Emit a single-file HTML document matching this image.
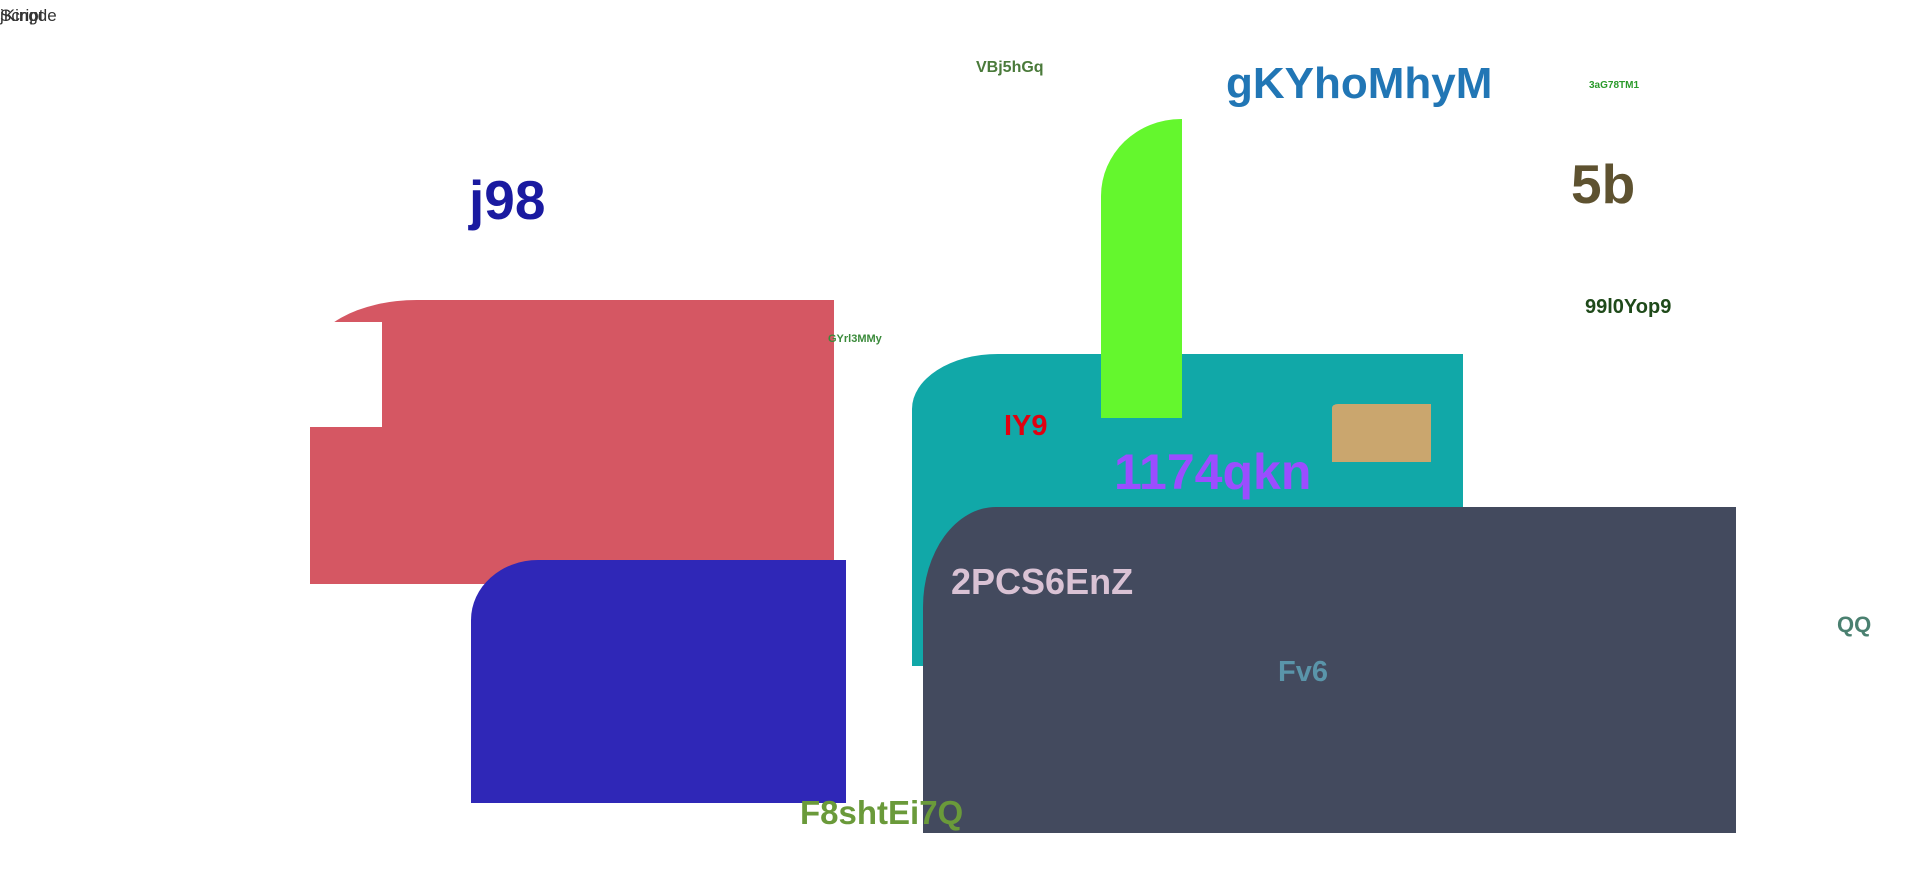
<!DOCTYPE html>
<html><head><meta charset="utf-8"><style>
html,body{margin:0;padding:0;width:1920px;height:870px;overflow:hidden;background:#fff;position:relative}
div{position:absolute}
.t{font-family:"Liberation Sans",sans-serif;font-weight:bold;white-space:nowrap;line-height:1}
</style></head><body>
<div class="t" style="left:0;top:7px;font-size:17px;font-weight:normal;color:#333">Script</div>
<div class="t" style="left:0;top:7px;font-size:17px;font-weight:normal;color:#333">jKingde</div>

<div style="left:310px;top:300px;width:524px;height:284px;background:#d55763;border-top-left-radius:107px 60px"></div>
<div style="left:310px;top:322px;width:72px;height:105px;background:#fff"></div>

<div style="left:471px;top:560px;width:375px;height:243px;background:#2f27b7;border-top-left-radius:67px 60px"></div>

<div style="left:912px;top:354px;width:551px;height:312px;background:#11a8a8;border-top-left-radius:86px 55px"></div>
<div style="left:1101px;top:119px;width:81px;height:299px;background:#64f72d;border-top-left-radius:80px 77px"></div>
<div style="left:1332px;top:404px;width:99px;height:58px;background:#caa66e;border-top-left-radius:6px 4px"></div>

<div style="left:923px;top:507px;width:813px;height:326px;background:#434a5e;border-top-left-radius:73px 100px"></div>

<div class="t" style="left:976px;top:60px;font-size:16px;color:#4a7a3a">VBj5hGq</div>
<div class="t" style="left:1226px;top:62px;font-size:44px;color:#2176b5">gKYhoMhyM</div>
<div class="t" style="left:1589px;top:81px;font-size:10px;color:#2a9a2a">3aG78TM1</div>
<div class="t" style="left:469px;top:173px;font-size:55px;color:#1a1aa0">j98</div>
<div class="t" style="left:1571px;top:157px;font-size:55px;color:#5e5230">5b</div>
<div class="t" style="left:1585px;top:297px;font-size:20px;color:#1f4a1a">99l0Yop9</div>
<div class="t" style="left:828px;top:334px;font-size:11px;color:#3a8a3a">GYrl3MMy</div>
<div class="t" style="left:1004px;top:412px;font-size:29px;color:#e00010">IY9</div>
<div class="t" style="left:1114px;top:447px;font-size:50px;color:#9b4dff">1174qkn</div>
<div class="t" style="left:951px;top:564px;font-size:36px;color:#d9c2d4">2PCS6EnZ</div>
<div class="t" style="left:1278px;top:658px;font-size:29px;color:#5a95aa">Fv6</div>
<div class="t" style="left:1837px;top:614px;font-size:22px;color:#4a8070">QQ</div>
<div class="t" style="left:800px;top:796px;font-size:33px;color:#6a9a3a">F8shtEi7Q</div>
</body></html>
